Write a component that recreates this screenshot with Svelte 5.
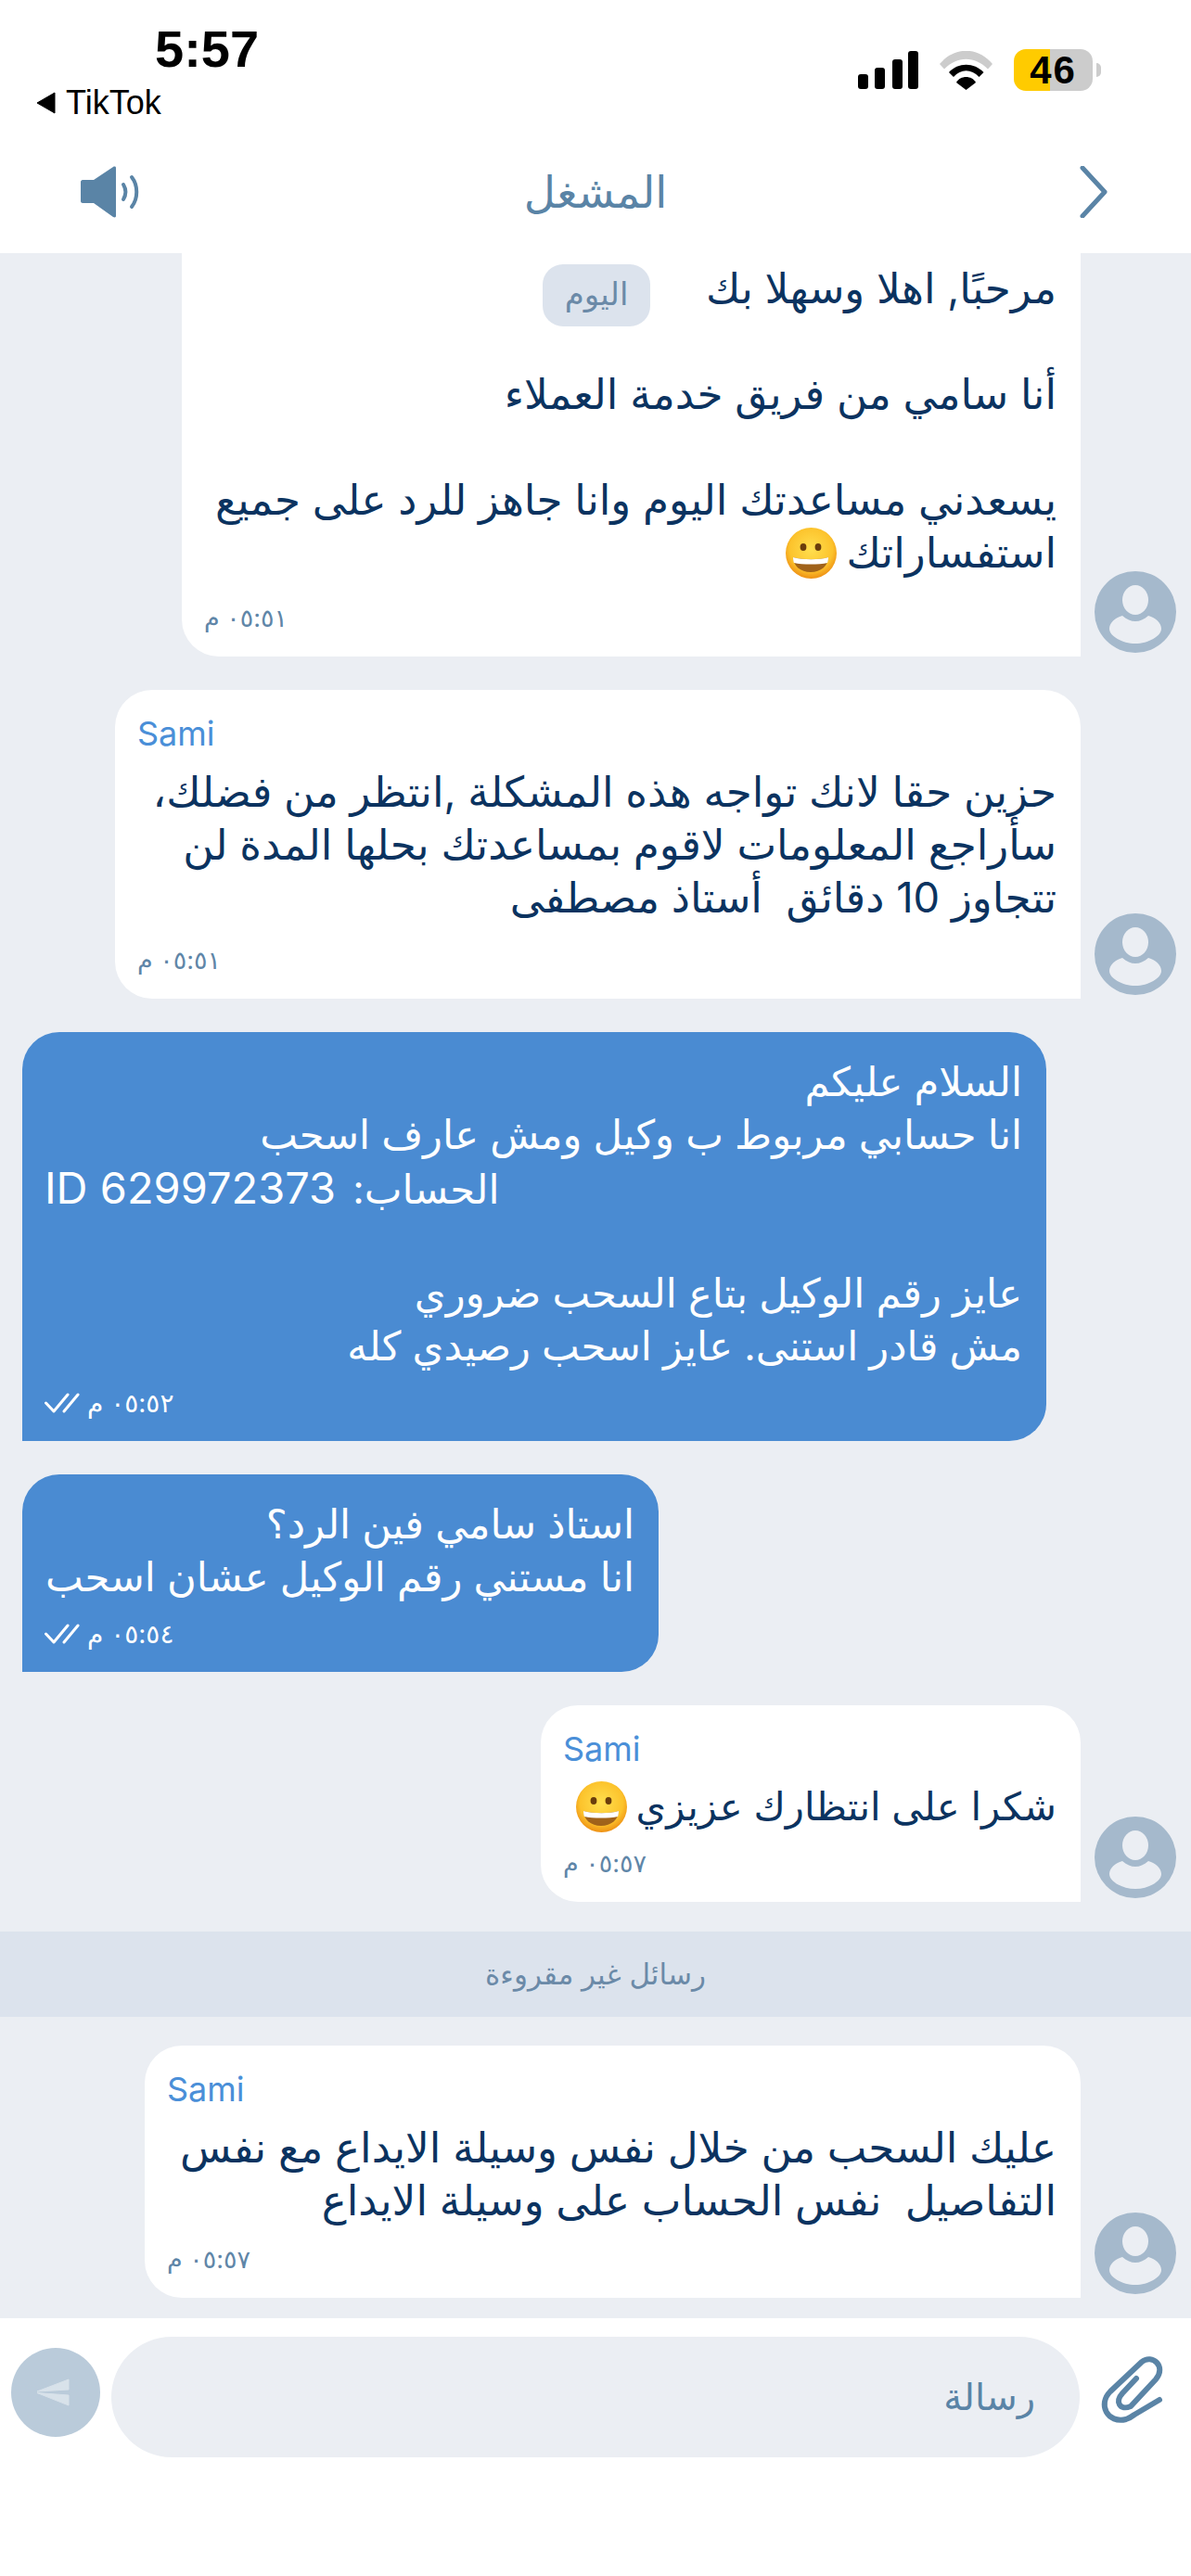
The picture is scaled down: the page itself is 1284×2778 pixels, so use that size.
<script>
  const incoming = (name, lines, time) => ({ side: 'in', name, lines, time });
  const outgoing = (lines, time) => ({ side: 'out', lines, time });
  const ACCOUNT_LINE = '#account';
  const messages = [
    { ...incoming(null, ['مرحبًا, اهلا وسهلا بك', '', 'أنا سامي من فريق خدمة العملاء', '', 'يسعدني مساعدتك اليوم وانا جاهز للرد على جميع', 'استفساراتك @'], '٠٥:٥١ م'), first: true, w: 969, h: 435 },
    { ...incoming('Sami', ['حزين حقا لانك تواجه هذه المشكلة ,انتظر من فضلك،', 'سأراجع المعلومات لاقوم بمساعدتك بحلها المدة لن', 'تتجاوز 10 دقائق\u00a0 أستاذ مصطفى'], '٠٥:٥١ م'), w: 1041, h: 333 },
    { ...outgoing(['السلام عليكم', 'انا حسابي مربوط ب وكيل ومش عارف اسحب', ACCOUNT_LINE, '', 'عايز رقم الوكيل بتاع السحب ضروري', 'مش قادر استنى. عايز اسحب رصيدي كله'], '٠٥:٥٢ م'), w: 1104, h: 441 },
    { ...outgoing(['استاذ سامي فين الرد؟', 'انا مستني رقم الوكيل عشان اسحب'], '٠٥:٥٤ م'), w: 686, h: 213 },
    { ...incoming('Sami', ['شكرا على انتظارك عزيزي @'], '٠٥:٥٧ م'), w: 582, h: 212, tight: true },
    { unread: true },
    { ...incoming('Sami', ['عليك السحب من خلال نفس وسيلة الايداع مع نفس', 'التفاصيل\u00a0 نفس الحساب على وسيلة الايداع'], '٠٥:٥٧ م'), w: 1009, h: 272 }
  ];
</script>

{#snippet grin()}
  <svg class="grin" viewBox="0 0 55 55" aria-hidden="true">
    <defs>
      <radialGradient id="face" cx="0.5" cy="0.42" r="0.6">
        <stop offset="0" stop-color="#ffdf4f" />
        <stop offset="0.7" stop-color="#fcc32c" />
        <stop offset="1" stop-color="#ec8a12" />
      </radialGradient>
    </defs>
    <circle cx="27.5" cy="27.5" r="27.5" fill="url(#face)" />
    <ellipse cx="19" cy="21" rx="3.4" ry="4" fill="#6a3d0c" />
    <ellipse cx="35" cy="21" rx="3.4" ry="4" fill="#6a3d0c" />
    <path d="M8 32C18 35 37 35 46 32C46 41 38 48 27 48C16 48 8 41 8 32Z" fill="#a0621a" />
    <path d="M8 32C18 35 37 35 46 32C46 35 45.5 37 45 38C36 40 18 40 9 38C8.500 37 8 35 8 32Z" fill="#fff" />
  </svg>
{/snippet}

{#snippet line(text)}
  {#if text.endsWith('@')}
    {text.slice(0, -1)}{@render grin()}
  {:else if text === ACCOUNT_LINE}
    <span class="idnum">ID 629972373</span> :الحساب
  {:else if text === ''}
    &nbsp;
  {:else}
    {text}
  {/if}
{/snippet}

<div class="page">
  <header class="top">
    <div class="status">
      <div class="clock">
        <div class="time">5:57</div>
        <div class="back"><svg width="22" height="24" viewBox="0 0 22 24"><path d="M21 1V23L2 12Z" fill="#000" stroke="#000" stroke-linejoin="round" /></svg><span>TikTok</span></div>
      </div>
      <div class="indicators">
        <svg width="65" height="41" viewBox="0 0 65 41" class="signal">
          <rect x="0" y="25" width="11" height="16" rx="3" /><rect x="18" y="18" width="11" height="23" rx="3" /><rect x="37" y="9" width="11" height="32" rx="3" /><rect x="54" y="0" width="11" height="41" rx="3" />
        </svg>
        <svg width="58" height="42" viewBox="0 0 58 42" class="wifi">
          <path d="M0 14C16 -5 41 -5 57 14L52 19.5C38 5 19 5 5 19.5Z" fill="#cccccc" />
          <path d="M10 23C20 12 37 12 47.500 23L42.500 28C34 19 23 19 15 28Z" fill="#000" />
          <path d="M18 34C22 26 35 26 39 34L28.500 42Z" fill="#000" />
        </svg>
        <div class="battery">
          <span class="level">46</span>
          <i class="nub"></i>
        </div>
      </div>
    </div>
    <div class="nav">
      <svg class="speaker" width="64" height="58" viewBox="0 0 64 58">
        <path d="M2 16H14L35 2C37 1 38 2 38 3V55C38 56 37 57 35 56L14 41H2C1 41 0 40 0 39V18C0 17 1 16 2 16Z" fill="#5a84a6" />
        <path d="M46 21C49 26 49 32 46 37" fill="none" stroke="#5a84a6" stroke-width="4" stroke-linecap="round" />
        <path d="M55 13C62 22 62 36 55 45" fill="none" stroke="#5a84a6" stroke-width="4" stroke-linecap="round" />
      </svg>
      <div class="title">المشغل</div>
      <svg class="chev" width="30" height="56" viewBox="0 0 30 56">
        <path d="M3 2L27 28L3 54" fill="none" stroke="#5a84a6" stroke-width="5" stroke-linecap="round" stroke-linejoin="round" />
      </svg>
    </div>
  </header>

  <main class="chat">
    <div class="today">اليوم</div>
    {#each messages as m}
      {#if m.unread}
        <div class="unread">رسائل غير مقروءة</div>
      {:else}
        <div class="row {m.side}" class:first={m.first}>
          <div class="bubble {m.side}" class:first={m.first} class:tight={m.tight} style="width:{m.w}px;height:{m.h}px" dir="rtl">
            {#if m.name}<div class="name" dir="ltr">{m.name}</div>{/if}
            <div class="text">
              {#each m.lines as l}<div class="ln" class:ltr={l === ACCOUNT_LINE} dir={l === ACCOUNT_LINE ? 'ltr' : undefined}>{@render line(l)}</div>{/each}
            </div>
            <div class="meta">
              {#if m.side === 'out'}
                <svg class="ticks" width="38" height="22" viewBox="0 0 38 22"><path d="M1.500 11L10 20L25 2M21 20L36 2" fill="none" stroke="#fff" stroke-width="3" stroke-linecap="round" stroke-linejoin="round" /></svg>
              {/if}
              <span>{m.time}</span>
            </div>
          </div>
          {#if m.side === 'in'}
            <svg class="avatar" width="88" height="88" viewBox="0 0 88 88">
              <circle cx="44" cy="44" r="44" fill="#a5b9cc" />
              <ellipse cx="44" cy="31" rx="14" ry="16" fill="#ebeef3" />
              <path d="M30 48C35 52 39 54 44 54C49 54 53 52 58 48C66 50 72 56 72 62C72 70 58 78 44 78C30 78 16 70 16 62C16 56 22 50 30 48Z" fill="#ebeef3" />
            </svg>
          {/if}
        </div>
      {/if}
    {/each}
  </main>

  <footer class="inputbar">
    <div class="send">
      <svg class="arrow" width="36" height="30" viewBox="0 0 36 30">
        <path d="M1 14L35 1V12Z" fill="#d8e2ea" stroke="#d8e2ea" stroke-linejoin="round" />
        <path d="M1 15.500L35 18V29Z" fill="#d8e2ea" stroke="#d8e2ea" stroke-linejoin="round" />
      </svg>
    </div>
    <div class="field" dir="rtl">رسالة</div>
    <svg class="clip" width="114" height="120" viewBox="0 0 114 120">
      <path d="M55 45L40 61C32 70 37 80 49 75L76 46C88 32 72 18 61 27L27 59C13 73 24 94 44 89C47 88 49 87 53 84L80 68" fill="none" stroke="#5a84a6" stroke-width="6" stroke-linecap="round" stroke-linejoin="round" />
    </svg>
  </footer>
</div>

<style>
  :global(body) { margin: 0; background: #fff; }
  .page {
    width: 1284px;
    height: 2778px;
    display: flex;
    flex-direction: column;
    overflow: hidden;
    background: #fff;
    font-family: Inter, "DejaVu Sans", sans-serif;
  }
  .top { height: 273px; flex: none; display: flex; flex-direction: column; }
  .status { display: flex; justify-content: space-between; height: 135px; flex: none; padding: 23px 106px 0 38px; box-sizing: border-box; }
  .clock { display: flex; flex-direction: column; }
  .time { font: 700 56px/60px "Liberation Sans", sans-serif; margin-left: 129px; color: #000; }
  .back { display: flex; align-items: center; gap: 11px; font: 400 36px/38px "Liberation Sans", sans-serif; color: #000; margin-top: 9px; }
  .indicators { display: flex; align-items: center; gap: 23px; height: 45px; margin-top: 30px; }
  .signal { fill: #000; }
  .battery { width: 85px; height: 45px; border-radius: 13px; position: relative; background: linear-gradient(90deg, #ffcb00 0 46%, #cccccc 46%); display: flex; align-items: center; justify-content: center; margin-left: -1px; }
  .level { font: 700 42px/45px "Liberation Sans", sans-serif; letter-spacing: 2px; color: #000; }
  .nub { position: absolute; right: -9px; top: 15px; width: 5px; height: 15px; background: #ccc; border-radius: 0 6px 6px 0; }
  .nav { position: relative; display: flex; align-items: center; justify-content: space-between; padding: 0 90px 0 87px; height: 100px; margin-top: 22px; }
  .title { position: absolute; left: 0; right: 0; text-align: center; font-size: 47px; line-height: 60px; color: #5a84a6; }

  .chat { height: 2227px; flex: none; background: #ebeef3; position: relative; display: flex; flex-direction: column; overflow: hidden; padding-bottom: 23px; box-sizing: border-box; }
  .today { position: absolute; left: 585px; top: 12px; width: 116px; height: 67px; border-radius: 22px; background: #dce3ed; color: #6b8aa8; font-size: 34px; line-height: 64px; text-align: center; z-index: 2; }
  .row { display: flex; align-items: flex-end; margin-top: 36px; }
  .row.first { margin-top: 0; }
  .row.in { justify-content: flex-end; padding-right: 16px; gap: 15px; }
  .row.out { justify-content: flex-start; padding-left: 24px; }
  .avatar { flex: none; margin-bottom: 4px; }
  .bubble { box-sizing: border-box; background: #fff; color: #0b3360; border-radius: 40px 40px 0 40px; padding: 0 26px; position: relative; display: flex; flex-direction: column; flex: none; }
  .bubble.first { border-radius: 0 0 0 40px; padding-top: 9px; }
  .bubble.out { background: #4a8bd2; color: #fff; border-radius: 40px 40px 40px 0; padding-top: 25px; }
  .name { color: #4a8fd8; font: 400 36px/44px Inter, sans-serif; text-align: left; padding-top: 25px; margin-bottom: 12px; margin-left: -2px; }
  .ln { font-size: 45.3px; line-height: 57px; white-space: nowrap; height: 57px; }
  .bubble.out .ln { font-size: 43.3px; }
  .bubble.tight .ln { font-size: 41.7px; }
  .ln.ltr { text-align: left; margin-left: -2px; font-size: 40.5px; }
  .idnum { font-size: 47px; margin-right: 6px; }
  .grin { width: 55px; height: 55px; vertical-align: middle; margin-right: -2px; margin-top: -6px; }
  .meta { position: absolute; left: 24px; bottom: 24px; display: flex; align-items: center; gap: 8px; font-size: 27px; line-height: 34px; color: #5f86a8; direction: ltr; }
  .bubble.out .meta { color: #fff; font-size: 28px; }
  .meta span { direction: rtl; }

  .unread { height: 92px; margin: 32px 0 31px; background: #dce3ed; color: #6b8aa8; font-size: 31px; line-height: 92px; text-align: center; flex: none; }
  .unread + .row { margin-top: 0; }

  .inputbar { height: 278px; flex: none; position: relative; display: flex; align-items: flex-start; padding: 20px 0 0 12px; box-sizing: border-box; gap: 12px; background: #fff; }
  .send { width: 96px; height: 96px; border-radius: 50%; background: #bacbda; display: flex; align-items: center; justify-content: center; margin-top: 12px; }
  .arrow { margin-right: 6px; }
  .field { width: 1044px; height: 130px; border-radius: 65px; background: #ebeef3; color: #5a84a6; font-size: 40px; line-height: 130px; padding: 0 48px; box-sizing: border-box; }
  .clip { margin-left: -6px; }
</style>
